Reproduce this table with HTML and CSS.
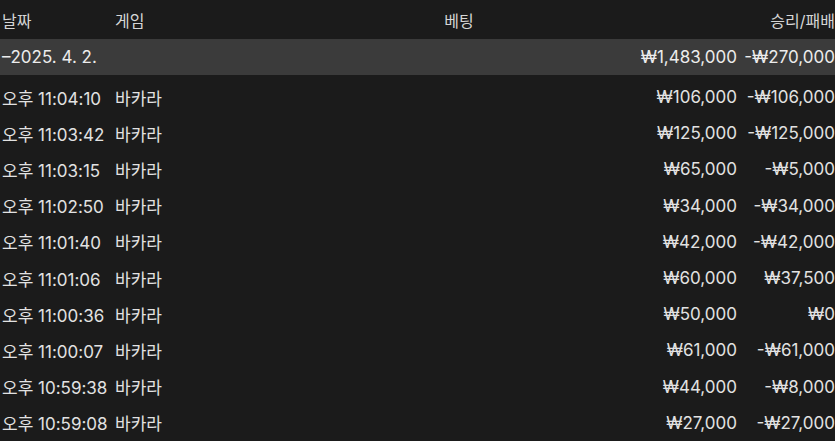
FILE: index.html
```html
<!DOCTYPE html>
<html lang="ko">
  <head>
    <meta charset="UTF-8" />
    <title>베팅 내역</title>
    <link rel="stylesheet" href="styles.css">
  </head>
  <body>
    <main class="history">
      <div class="row head">
        <div>날짜</div>
        <div>게임</div>
        <div class="center">베팅</div>
        <div class="num">승리/패배</div>
      </div>

      <div class="row group">
        <div class="date">–2025. 4. 2.</div>
        <div></div>
        <div class="num">₩1,483,000</div>
        <div class="num">-₩270,000</div>
      </div>

      <div class="list">
        <div class="row">
          <div>오후 11:04:10</div><div>바카라</div>
          <div class="num">₩106,000</div><div class="num">-₩106,000</div>
        </div>
        <div class="row">
          <div>오후 11:03:42</div><div>바카라</div>
          <div class="num">₩125,000</div><div class="num">-₩125,000</div>
        </div>
        <div class="row">
          <div>오후 11:03:15</div><div>바카라</div>
          <div class="num">₩65,000</div><div class="num">-₩5,000</div>
        </div>
        <div class="row">
          <div>오후 11:02:50</div><div>바카라</div>
          <div class="num">₩34,000</div><div class="num">-₩34,000</div>
        </div>
        <div class="row">
          <div>오후 11:01:40</div><div>바카라</div>
          <div class="num">₩42,000</div><div class="num">-₩42,000</div>
        </div>
        <div class="row">
          <div>오후 11:01:06</div><div>바카라</div>
          <div class="num">₩60,000</div><div class="num">₩37,500</div>
        </div>
        <div class="row">
          <div>오후 11:00:36</div><div>바카라</div>
          <div class="num">₩50,000</div><div class="num">₩0</div>
        </div>
        <div class="row">
          <div>오후 11:00:07</div><div>바카라</div>
          <div class="num">₩61,000</div><div class="num">-₩61,000</div>
        </div>
        <div class="row">
          <div>오후 10:59:38</div><div>바카라</div>
          <div class="num">₩44,000</div><div class="num">-₩8,000</div>
        </div>
        <div class="row">
          <div>오후 10:59:08</div><div>바카라</div>
          <div class="num">₩27,000</div><div class="num">-₩27,000</div>
        </div>
      </div>
    </main>
  </body>
</html>
```

FILE: styles.css
```css
* {
  box-sizing: border-box;
  margin: 0;
  padding: 0;
}

html,
body {
  background: #1b1b1b;
  color: #e2e2e2;
  font-family: "Inter", "Noto Sans CJK KR", sans-serif;
  font-size: 17px;
  overflow: hidden;
}

.history {
  width: 835px;
}

/* Table rows */
.row {
  display: grid;
  grid-template-columns: 113px 60px 1fr 98px;
  align-items: center;
  height: 36.2px;
  padding-left: 2px;
  white-space: nowrap;
}

.row .num {
  text-align: right;
}

.head {
  height: 39px;
  font-size: 16px;
  color: #d6d6d6;
}

.head .center {
  text-align: center;
  padding-left: 6px;
}

.group {
  height: 36px;
  background: #3b3b3b;
  color: #ececec;
}

.group .date {
  grid-column: span 1;
}

.list {
  padding-top: 4px;
}
```
